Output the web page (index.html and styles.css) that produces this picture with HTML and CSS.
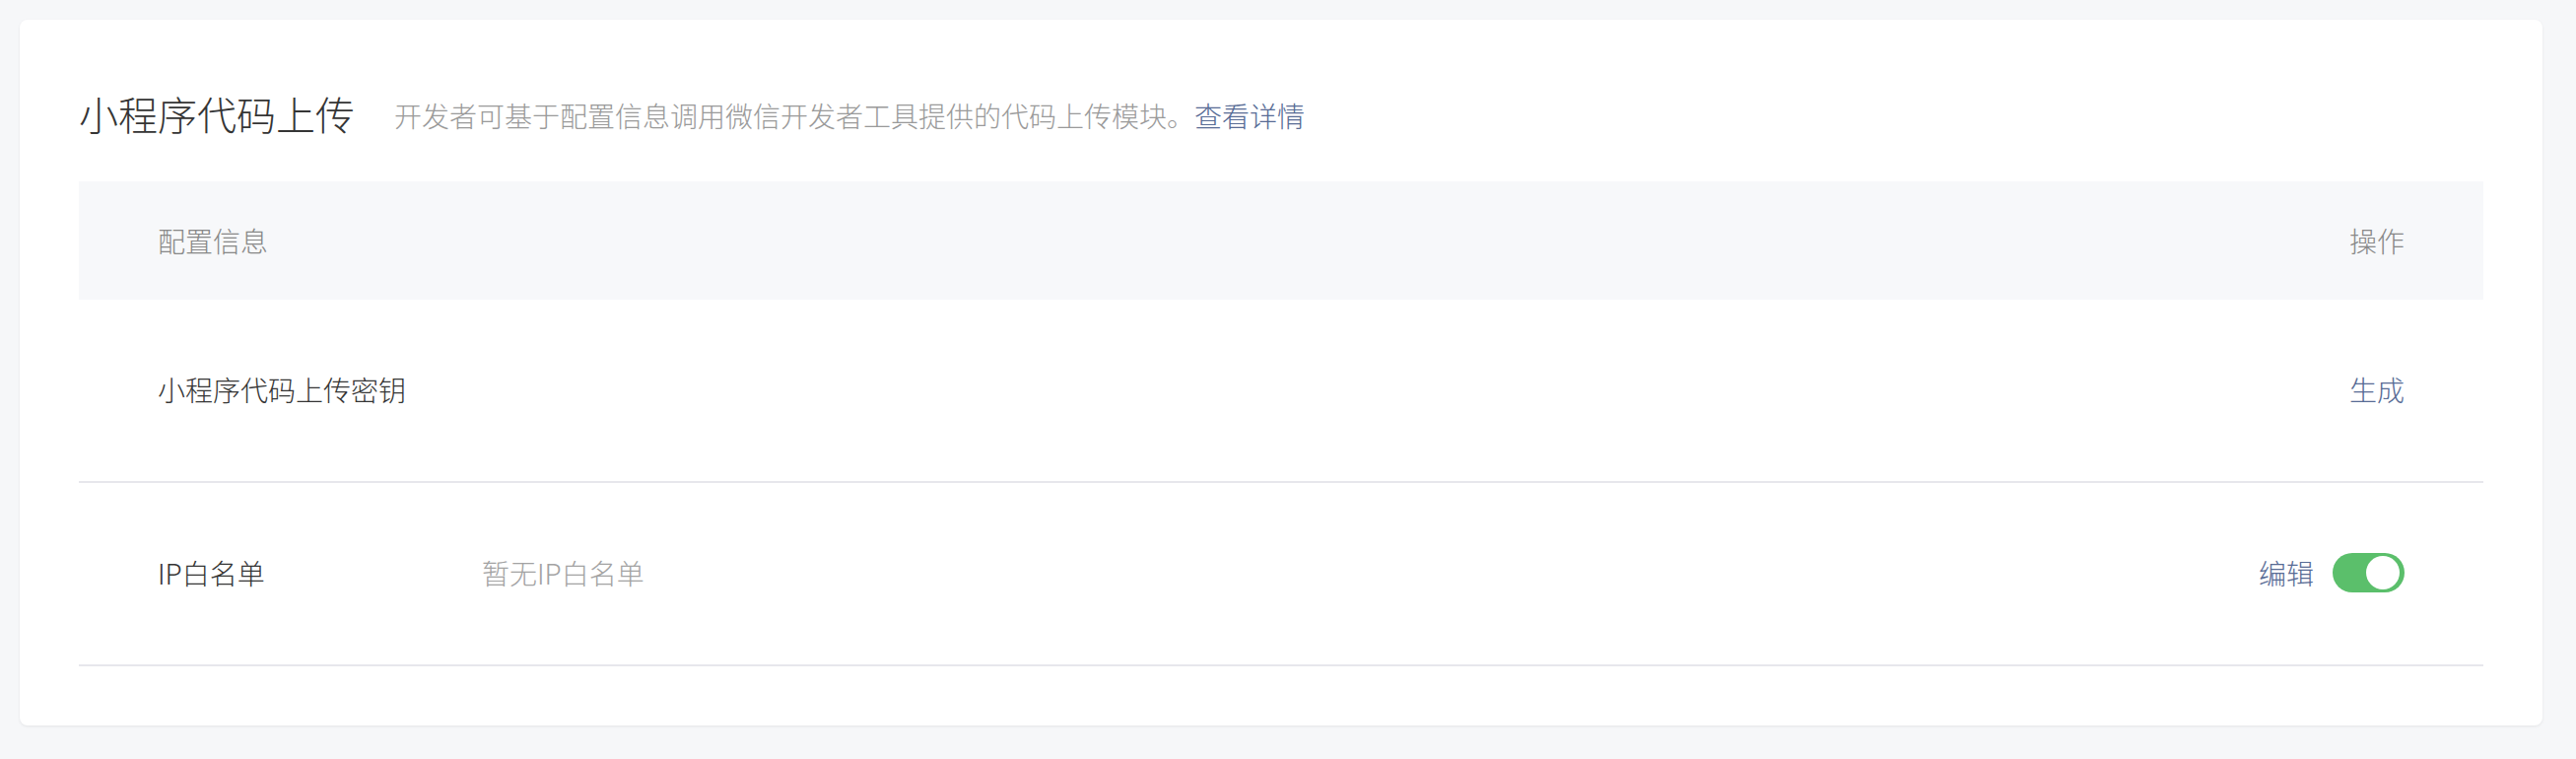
FILE: index.html
```html
<!DOCTYPE html>
<html lang="zh-CN">
<head>
<meta charset="utf-8">
<title>小程序代码上传</title>
<link rel="stylesheet" href="styles.css">
</head>
<body>
<div class="page">
  <section class="card">
    <div class="head">
      <h2 class="title">小程序代码上传</h2>
      <p class="desc">开发者可基于配置信息调用微信开发者工具提供的代码上传模块。<a class="link" href="#">查看详情</a></p>
    </div>
    <div class="table">
      <div class="thead">
        <div class="col-name">配置信息</div>
        <div class="col-value"></div>
        <div class="col-op">操作</div>
      </div>
      <div class="row">
        <div class="col-name">小程序代码上传密钥</div>
        <div class="col-value"></div>
        <div class="col-op"><a class="link" href="#">生成</a></div>
      </div>
      <div class="row">
        <div class="col-name">IP白名单</div>
        <div class="col-value muted">暂无IP白名单</div>
        <div class="col-op">
          <a class="link" href="#">编辑</a>
          <span class="switch"><span class="knob"></span></span>
        </div>
      </div>
    </div>
  </section>
</div>
</body>
</html>
```

FILE: styles.css
```css
* { box-sizing: border-box; }
html, body {
  margin: 0;
  padding: 0;
  background: #f6f7f9;
}
body {
  font-family: "Noto Sans CJK SC", "Noto Sans", sans-serif;
  font-weight: 300;
  color: #353535;
}
.page {
  padding: 20px 34px 34px 20px;
}
.card {
  background: #ffffff;
  border-radius: 8px;
  box-shadow: 0 1px 3px rgba(0, 0, 0, 0.08);
  padding: 67px 60px 60px 60px;
  height: 716px;
}
.head {
  display: flex;
  align-items: center;
  height: 56px;
  margin-bottom: 41px;
}
.title {
  margin: 0;
  font-size: 40px;
  font-weight: 300;
  line-height: 56px;
  color: #353535;
}
.desc {
  margin: 0 0 0 40px;
  padding-top: 3px;
  font-size: 28px;
  line-height: 40px;
  color: #9a9a9a;
}
.link {
  color: #576b95;
  text-decoration: none;
}
.thead, .row {
  display: flex;
  align-items: center;
  padding: 0 80px;
  font-size: 28px;
  line-height: 40px;
}
.thead {
  height: 120px;
  background: #f7f8fa;
  color: #888888;
}
.row {
  height: 186px;
  padding-bottom: 3px;
  border-bottom: 2px solid #e7e7ec;
}
.col-name {
  width: 329px;
  flex: none;
}
.col-value {
  flex: 1;
}
.muted {
  color: #a3a3a3;
}
.col-op {
  display: flex;
  align-items: center;
  gap: 19px;
}
.switch {
  position: relative;
  display: inline-block;
  width: 73px;
  height: 40px;
  border-radius: 20px;
  background: #5bbf6b;
}
.knob {
  position: absolute;
  top: 3px;
  right: 5px;
  width: 34px;
  height: 34px;
  border-radius: 50%;
  background: #ffffff;
}
```
